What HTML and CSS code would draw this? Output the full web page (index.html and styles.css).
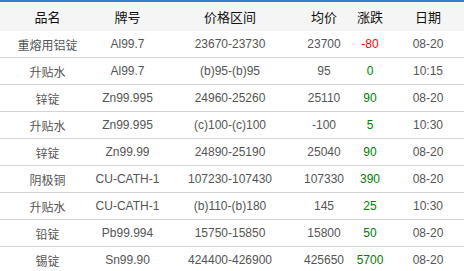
FILE: index.html
```html
<!DOCTYPE html>
<html lang="zh">
<head>
<meta charset="utf-8">
<link rel="stylesheet" href="styles.css">
</head>
<body>
<table class="price-table">
  <colgroup>
    <col class="c-name"><col class="c-brand"><col class="c-range"><col class="c-avg"><col class="c-chg"><col class="c-date">
  </colgroup>
  <thead>
    <tr><th>品名</th><th>牌号</th><th>价格区间</th><th>均价</th><th>涨跌</th><th>日期</th></tr>
  </thead>
  <tbody>
    <tr><td>重熔用铝锭</td><td>Al99.7</td><td>23670-23730</td><td>23700</td><td class="down">-80</td><td>08-20</td></tr>
    <tr><td>升贴水</td><td>Al99.7</td><td>(b)95-(b)95</td><td>95</td><td class="up">0</td><td>10:15</td></tr>
    <tr><td>锌锭</td><td>Zn99.995</td><td>24960-25260</td><td>25110</td><td class="up">90</td><td>08-20</td></tr>
    <tr><td>升贴水</td><td>Zn99.995</td><td>(c)100-(c)100</td><td>-100</td><td class="up">5</td><td>10:30</td></tr>
    <tr><td>锌锭</td><td>Zn99.99</td><td>24890-25190</td><td>25040</td><td class="up">90</td><td>08-20</td></tr>
    <tr><td>阴极铜</td><td>CU-CATH-1</td><td>107230-107430</td><td>107330</td><td class="up">390</td><td>08-20</td></tr>
    <tr><td>升贴水</td><td>CU-CATH-1</td><td>(b)110-(b)180</td><td>145</td><td class="up">25</td><td>10:30</td></tr>
    <tr><td>铅锭</td><td>Pb99.994</td><td>15750-15850</td><td>15800</td><td class="up">50</td><td>08-20</td></tr>
    <tr><td>锡锭</td><td>Sn99.90</td><td>424400-426900</td><td>425650</td><td class="up">5700</td><td>08-20</td></tr>
  </tbody>
</table>
</body>
</html>
```
FILE: styles.css
```css
html, body {
  margin: 0;
  padding: 0;
  background: #fff;
}
body {
  font-family: "Liberation Sans", "Noto Sans CJK SC", Arial, sans-serif;
  font-size: 12px;
  color: #555;
  overflow: hidden;
}
.price-table {
  width: 464px;
  border-collapse: collapse;
  table-layout: fixed;
  border-top: 2px solid #3a7bd5;
}
.c-name { width: 95px; }
.c-brand { width: 65px; }
.c-range { width: 140px; }
.c-avg { width: 48px; }
.c-chg { width: 44px; }
.c-date { width: 72px; }
.price-table th {
  height: 29px;
  padding: 0;
  background: #f5f5f5;
  color: #111;
  font-size: 13px;
  font-weight: normal;
  text-align: center;
  white-space: nowrap;
}
.price-table td {
  height: 26px;
  padding: 0;
  text-align: center;
  white-space: nowrap;
  border-bottom: 1px solid #d4d4d4;
}
.price-table td.down { color: #ff0000; }
.price-table td.up { color: #008000; }
```
